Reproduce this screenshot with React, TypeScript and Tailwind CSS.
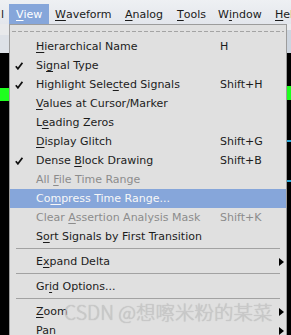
import React from 'react'

type Item =
  | { sep: true }
  | {
      sep?: false
      label: string
      m: number
      sc?: string
      check?: boolean
      disabled?: boolean
      active?: boolean
      sub?: boolean
    }

const items: Item[] = [
  { label: 'Hierarchical Name', m: 0, sc: 'H' },
  { label: 'Signal Type', m: 2, check: true },
  { label: 'Highlight Selected Signals', m: 14, check: true, sc: 'Shift+H' },
  { label: 'Values at Cursor/Marker', m: 0 },
  { label: 'Leading Zeros', m: 1 },
  { label: 'Display Glitch', m: 0, sc: 'Shift+G' },
  { label: 'Dense Block Drawing', m: 6, check: true, sc: 'Shift+B' },
  { label: 'All File Time Range', m: 4, disabled: true },
  { label: 'Compress Time Range...', m: 2, active: true },
  { label: 'Clear Assertion Analysis Mask', m: 6, disabled: true, sc: 'Shift+K' },
  { label: 'Sort Signals by First Transition', m: 1 },
  { sep: true },
  { label: 'Expand Delta', m: 1, sub: true },
  { sep: true },
  { label: 'Grid Options...', m: 2 },
  { sep: true },
  { label: 'Zoom', m: 0, sub: true },
  { label: 'Pan', m: 0, sub: true },
]

function Mn({ text, i }: { text: string; i: number }) {
  return (
    <>
      {text.slice(0, i)}
      <span className="underline underline-offset-[2px] decoration-1">{text[i]}</span>
      {text.slice(i + 1)}
    </>
  )
}

function Check() {
  return (
    <svg width="8" height="8" viewBox="0 0 8 8" className="ml-[5px]">
      <path d="M0.8 4.2 L2.9 6.8 L7.4 0.8" fill="none" stroke="#111" strokeWidth="1.7" />
    </svg>
  )
}

function Arrow() {
  return (
    <svg width="5" height="8" viewBox="0 0 5 8">
      <path d="M0 0 L5 4 L0 8 Z" fill="#000" />
    </svg>
  )
}

export default function App() {
  const font = { fontFamily: '"DejaVu Sans", sans-serif' }
  return (
    <div className="relative w-[291px] h-[335px] overflow-hidden bg-black text-[11px] leading-none" style={font}>
      {/* menu bar */}
      <div className="h-[24px] flex items-end bg-gradient-to-b from-[#eef0f3] to-[#e3e6ec] text-[#1a1a1a] whitespace-nowrap">
        <span className="w-[9px] shrink-0 h-[20px] flex items-center pl-[1px]">l</span>
        <span className="w-[40px] shrink-0 h-[20px] flex items-center pl-[7px] bg-[#86a6da] text-white">
          <Mn text="View" i={0} />
        </span>
        <span className="w-[70px] shrink-0 h-[20px] flex items-center pl-[6px]"><Mn text="Waveform" i={0} /></span>
        <span className="w-[52px] shrink-0 h-[20px] flex items-center pl-[6px]"><Mn text="Analog" i={0} /></span>
        <span className="w-[41px] shrink-0 h-[20px] flex items-center pl-[6px]"><Mn text="Tools" i={0} /></span>
        <span className="w-[57px] shrink-0 h-[20px] flex items-center pl-[6px]"><Mn text="Window" i={1} /></span>
        <span className="shrink-0 h-[20px] flex items-center pl-[6px]"><Mn text="Help" i={0} /></span>
      </div>

      <div className="flex h-[311px]">
        {/* left strip */}
        <div className="w-[9px] flex flex-col">
          <div className="h-[11px] bg-[#e8e9eb]" />
          <div className="h-[18px] bg-[#dde1e7]" />
          <div className="h-[35px] bg-black" />
          <div className="h-[13px] bg-[#1eff1e]" />
          <div className="flex-1 bg-black" />
        </div>

        {/* dropdown menu */}
        <div className="w-[278px] border border-b-0 border-[#9c9c9c] bg-[#e0e0e0] text-[#1c1c1c]">
          <div className="h-[12px] flex items-center px-[2px]">
            <div className="h-[1px] w-full bg-[repeating-linear-gradient(90deg,#a4a4a4_0_4px,transparent_4px_6px)]" />
          </div>
          {items.map((it, idx) =>
            it.sep ? (
              <div key={idx} className="h-[6px] pt-[2px] px-[6px]">
                <div className="h-[1px] bg-[#a2a2a2]" />
              </div>
            ) : (
              <div
                key={idx}
                className={
                  'h-[19px] flex items-center ' +
                  (it.active ? 'bg-[#86a6da] text-[#f7f7f7] ' : '') +
                  (it.disabled ? 'text-[#8c8c8c] ' : '')
                }
              >
                <div className="w-[26px] flex items-center">{it.check && <Check />}</div>
                <div className="w-[184px] whitespace-nowrap">
                  <Mn text={it.label} i={it.m} />
                </div>
                <div className="whitespace-nowrap">{it.sc}</div>
                {it.sub && (
                  <div className="ml-auto mr-[2px] flex items-center">
                    <Arrow />
                  </div>
                )}
              </div>
            )
          )}
        </div>

        {/* right strip */}
        <div className="w-[4px] flex flex-col">
          <div className="h-[6px] bg-[#e9ebee]" />
          <div className="h-[23px] bg-[#cdd5df]" />
          <div className="h-[33px] bg-black" />
          <div className="h-[14px] bg-[#1eff1e]" />
          <div className="h-[40px] bg-black" />
          <div className="h-[2px] bg-[#2aa8d8]" />
          <div className="h-[38px] bg-black" />
          <div className="h-[2px] bg-[#2aa8d8]" />
          <div className="flex-1 bg-black" />
        </div>
      </div>

      {/* watermark */}
      <div
        className="absolute left-[64px] top-[302px] text-[19.5px] leading-none text-[#c9c9c9] [text-shadow:0_0_1px_rgba(0,0,0,0.2)] whitespace-nowrap"
        style={{ fontFamily: '"Noto Sans CJK SC", sans-serif', fontWeight: 300 }}
      >
        CSDN @想嚓米粉的某菜
      </div>
    </div>
  )
}
